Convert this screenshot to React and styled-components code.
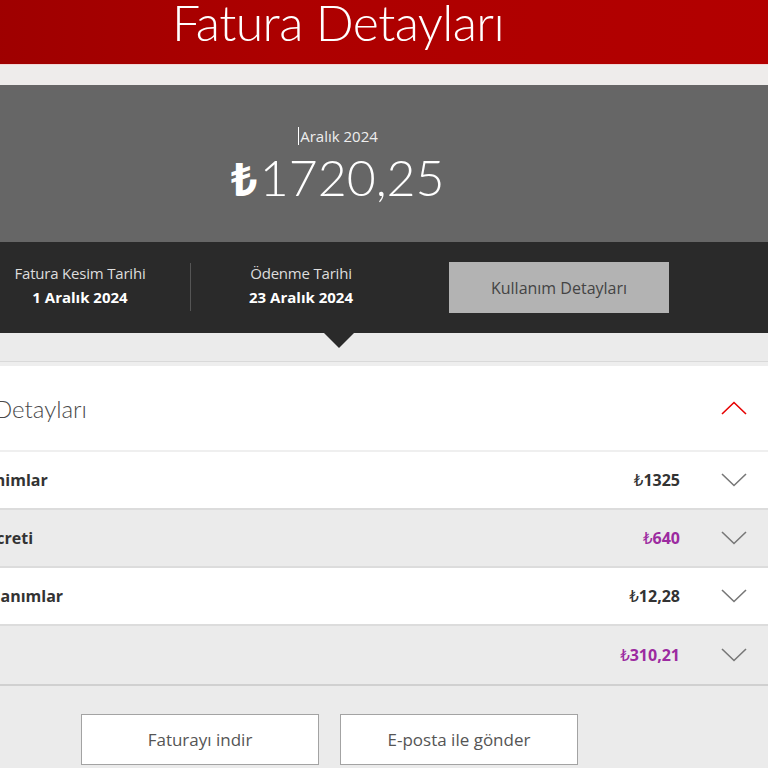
import React from "react";
import styled, { createGlobalStyle } from "styled-components";

const Global = createGlobalStyle`
  html, body {
    margin: 0;
    padding: 0;
    background: #ebebeb;
    overflow: hidden;
  }
  body {
    font-family: "Open Sans", "Noto Sans", "DejaVu Sans", sans-serif;
  }
`;

const Page = styled.div`
  width: 900px;
  margin-left: -112px;
`;

const Header = styled.header`
  height: 65px;
  overflow: hidden;
  display: flex;
  justify-content: center;
  align-items: flex-end;
  background: linear-gradient(90deg, #990000 0%, #ad0000 45%, #b30000 100%);
  border-bottom: 1px solid #f2d6d6;
  box-sizing: border-box;
`;

const Title = styled.h1`
  margin: 0 0 17px;
  font-family: "Lato", "Open Sans", sans-serif;
  font-weight: 300;
  font-size: 50px;
  letter-spacing: -0.6px;
  line-height: 1;
  color: #ffffff;
`;

const Strip = styled.div`
  height: 20px;
  background: #eeeceb;
`;

const Summary = styled.section`
  height: 157px;
  background: #666666;
  display: flex;
  flex-direction: column;
  align-items: center;
  padding-top: 41px;
  box-sizing: border-box;
`;

const Month = styled.div`
  display: flex;
  align-items: center;
  font-size: 15px;
  color: #eeeeee;
  line-height: 20px;
`;

const Caret = styled.span`
  width: 1px;
  height: 18px;
  background: #ffffff;
  margin-right: 1px;
`;

const Amount = styled.div`
  margin-top: 1px;
  font-family: "Lato", "Open Sans", sans-serif;
  font-weight: 300;
  font-size: 50px;
  line-height: 60px;
  color: #ffffff;
`;

const Lira = styled.span`
  font-family: "Noto Sans", "DejaVu Sans", sans-serif;
  font-weight: 700;
  font-size: 46px;
  margin-right: 2px;
`;

const DateBar = styled.section`
  position: relative;
  height: 91px;
  background: #2a2a2a;
  display: flex;
  align-items: center;
  padding-left: 82px;
  box-sizing: border-box;

  &::after {
    content: "";
    position: absolute;
    left: 50%;
    bottom: -15px;
    margin-left: -14px;
    border-left: 15px solid transparent;
    border-right: 15px solid transparent;
    border-top: 15px solid #2a2a2a;
  }
`;

const DateCol = styled.div`
  width: 220px;
  display: flex;
  flex-direction: column;
  align-items: center;
  gap: 2px;
  margin-bottom: 6px;
`;

const DateLabel = styled.span`
  font-size: 15px;
  line-height: 22px;
  letter-spacing: -0.2px;
  color: #dddddd;
`;

const DateValue = styled.span`
  font-size: 15px;
  line-height: 22px;
  font-weight: 700;
  color: #ffffff;
`;

const Divider = styled.div`
  width: 1px;
  height: 48px;
  margin-bottom: 2px;
  background: #555555;
`;

const UsageButton = styled.button`
  margin-left: 38px;
  width: 220px;
  height: 51px;
  border: none;
  background: #b3b3b3;
  color: #444444;
  font-family: "Open Sans", sans-serif;
  font-size: 16px;
  cursor: pointer;
`;

const Gap = styled.div`
  height: ${(p) => p.$h}px;
`;

const Card = styled.section`
  margin: 0 10px;
  background: #ffffff;
  border-top: 1px solid #d9d9d9;
  box-shadow: inset 0 4px 0 #eeeeee;
  padding-top: 4px;
  border-bottom: 2px solid #d0d0d0;
`;

const CardHead = styled.div`
  height: 86px;
  display: flex;
  align-items: center;
  justify-content: space-between;
  padding: 0 20px 0 25px;
  border-bottom: 2px solid #efefef;
  box-sizing: border-box;
`;

const CardTitle = styled.h2`
  margin: 0;
  font-family: "Lato", "Open Sans", sans-serif;
  font-weight: 300;
  font-size: 24px;
  color: #4a4a4a;
`;

const Row = styled.div`
  height: 58px;
  display: flex;
  align-items: center;
  padding: 0 20px 0 25px;
  background: ${(p) => (p.$shade ? "#ebebeb" : "#ffffff")};
  border-bottom: ${(p) => (p.$last ? "none" : "2px solid #dcdcdc")};
  box-sizing: border-box;
`;

const RowLabel = styled.span`
  flex: 1;
  font-size: 16px;
  font-weight: 700;
  color: #333333;
`;

const RowValue = styled.span`
  font-size: 16px;
  font-weight: 700;
  color: ${(p) => (p.$accent ? "#9c2aa0" : "#333333")};
`;

const RowLira = styled.span`
  font-family: "DejaVu Sans", sans-serif;
  font-weight: 400;
  font-size: 15px;
`;

const ChevronBox = styled.span`
  display: flex;
  width: 48px;
  justify-content: center;
  margin-left: 30px;
`;

const Chevron = ({ up, color }) => (
  <svg width="26" height="14" viewBox="0 0 26 14" fill="none">
    <path
      d={up ? "M1 13 L13 1.5 L25 13" : "M1 1 L13 12.5 L25 1"}
      stroke={color}
      strokeWidth="1.6"
    />
  </svg>
);

const Actions = styled.div`
  display: flex;
  gap: 21px;
  padding: 28px 0 0 193px;
`;

const ActionButton = styled.button`
  width: 238px;
  height: 51px;
  background: #ffffff;
  border: 1px solid #a3a3a3;
  color: #555555;
  font-family: "Open Sans", sans-serif;
  font-size: 17px;
  cursor: pointer;
`;

const rows = [
  { label: "Temel Tanimlar", value: "1325" },
  { label: "Hizmet Ücreti", value: "640", accent: true, shade: true },
  { label: "Diğer Kullanımlar", value: "12,28" },
  { label: "Vergi", value: "310,21", accent: true, shade: true },
];

export default function App() {
  return (
    <>
      <Global />
      <Page>
        <Header>
          <Title>Fatura Detayları</Title>
        </Header>
        <Strip />
        <Summary>
          <Month>
            <Caret />
            Aralık 2024
          </Month>
          <Amount>
            <Lira>₺</Lira>1720,25
          </Amount>
        </Summary>
        <DateBar>
          <DateCol>
            <DateLabel>Fatura Kesim Tarihi</DateLabel>
            <DateValue>1 Aralık 2024</DateValue>
          </DateCol>
          <Divider />
          <DateCol>
            <DateLabel>Ödenme Tarihi</DateLabel>
            <DateValue>23 Aralık 2024</DateValue>
          </DateCol>
          <UsageButton>Kullanım Detayları</UsageButton>
        </DateBar>
        <Gap $h={28} />
        <Card>
          <CardHead>
            <CardTitle>Fatura Detayları</CardTitle>
            <ChevronBox>
              <Chevron up color="#e60000" />
            </ChevronBox>
          </CardHead>
          {rows.map((r, i) => (
            <Row key={r.label} $shade={r.shade} $last={i === rows.length - 1}>
              <RowLabel>{r.label}</RowLabel>
              <RowValue $accent={r.accent}>
                <RowLira>₺</RowLira>
                {r.value}
              </RowValue>
              <ChevronBox>
                <Chevron color="#777777" />
              </ChevronBox>
            </Row>
          ))}
        </Card>
        <Actions>
          <ActionButton>Faturayı indir</ActionButton>
          <ActionButton>E-posta ile gönder</ActionButton>
        </Actions>
      </Page>
    </>
  );
}
